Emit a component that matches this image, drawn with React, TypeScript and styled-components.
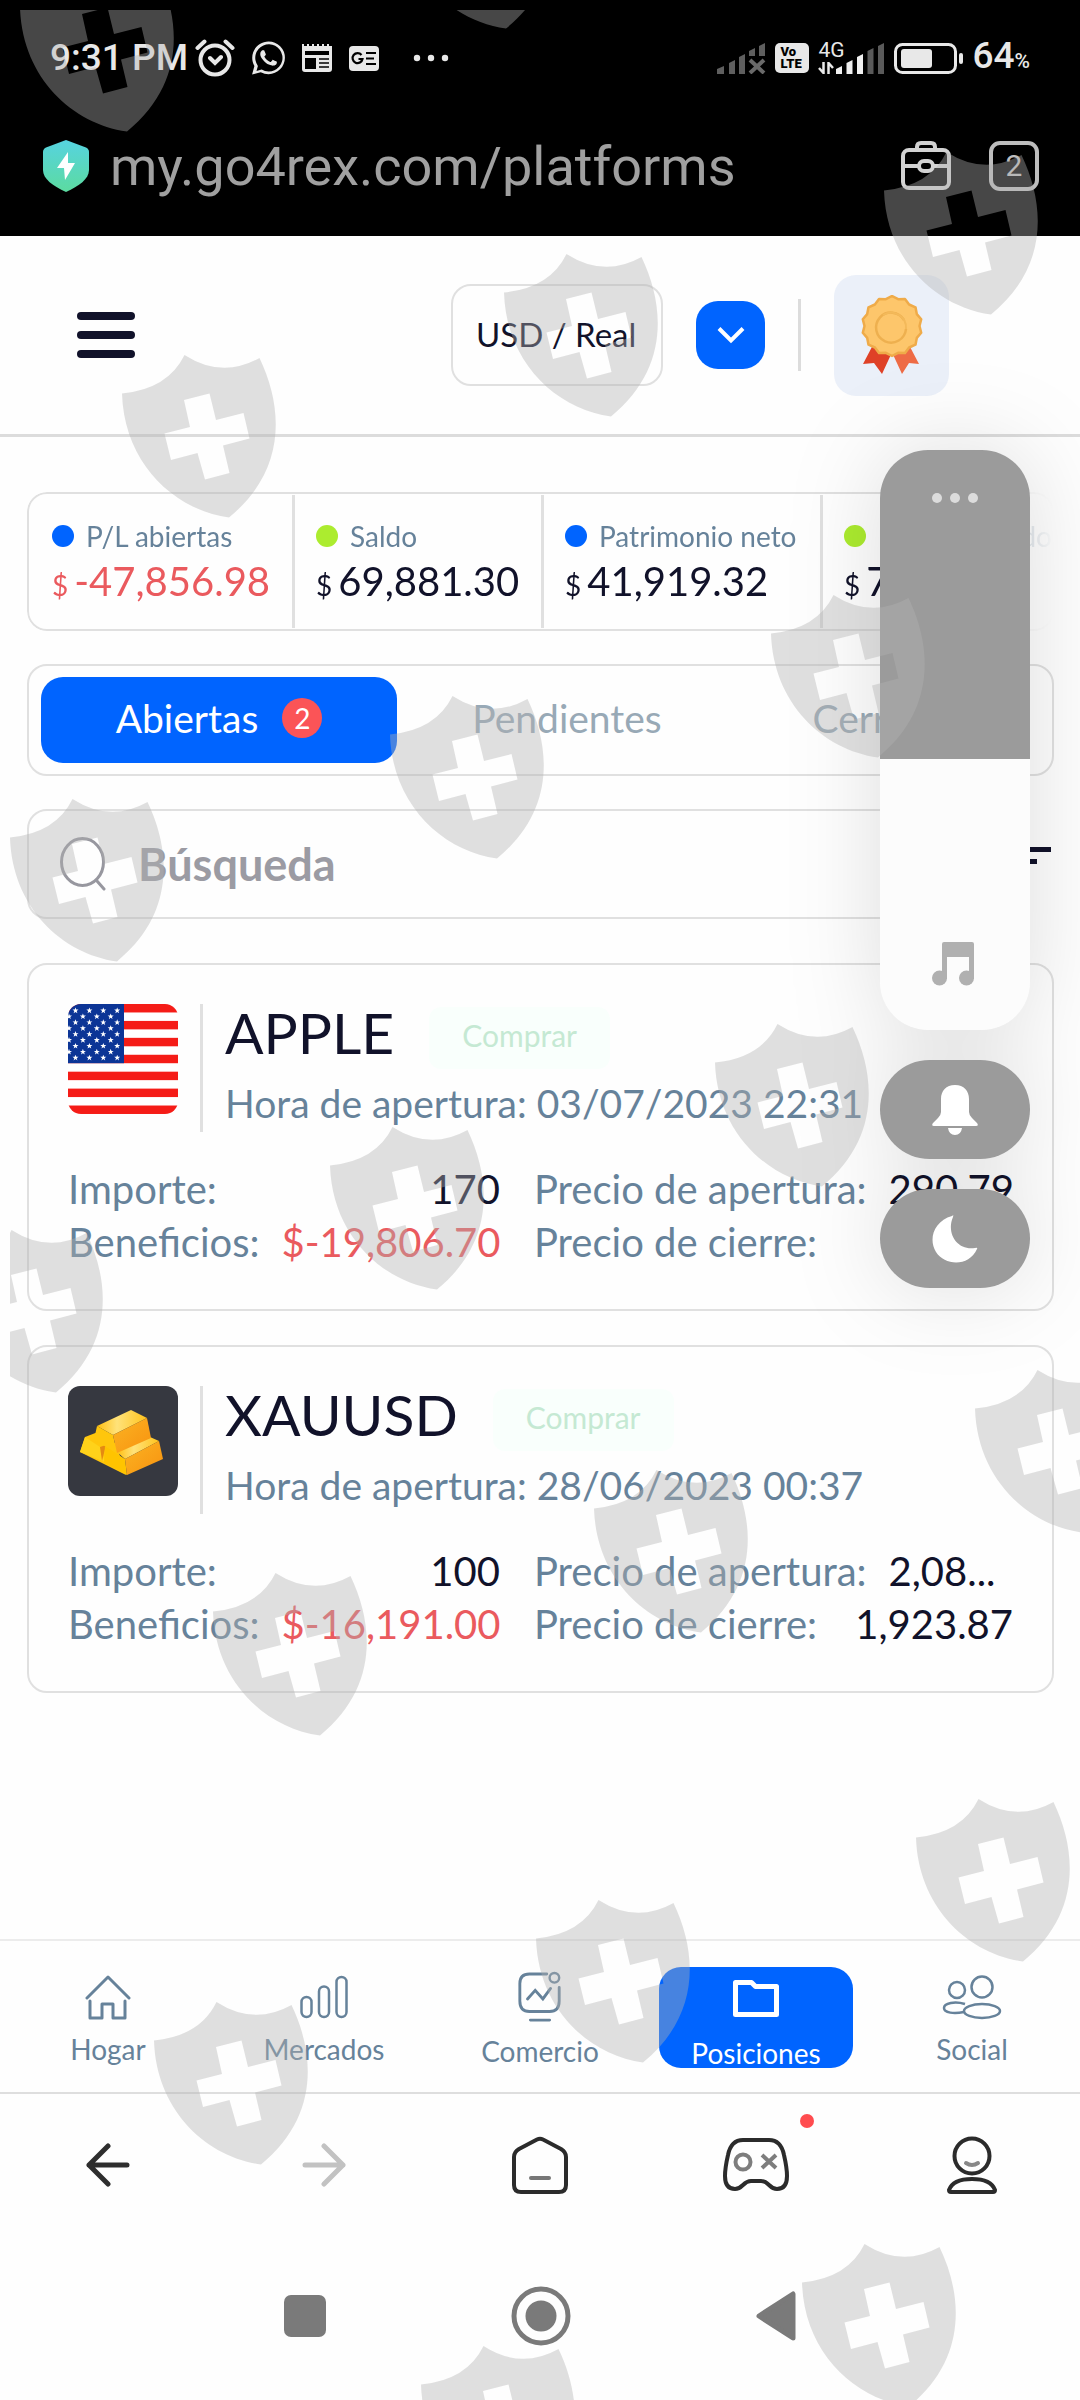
import React from "react";
import styled, { createGlobalStyle } from "styled-components";

const Global = createGlobalStyle`
  *, *::before, *::after { box-sizing: border-box; }
  body { margin: 0; background: #fefefe; }
  button, input, select { font: inherit; color: inherit; }
  button { border: 0; padding: 0; background: none; cursor: pointer; }
  a { color: inherit; text-decoration: none; }
  svg { display: block; flex: none; }
`;

const line = "#e0e0e0";
const ink = "#11122a";
const slate = "#66829a";
const blue = "#0064ff";
const red = "#ea5a5e";
const ui = `"Lato", "Open Sans", sans-serif`;
const system = `"Roboto", "Noto Sans", sans-serif`;

const Page = styled.div`
  position: relative;
  display: flex;
  flex-direction: column;
  min-height: 100vh;
  overflow: hidden;
  background: #fefefe;
  color: ${ink};
  font-family: ${ui};
`;

/* ---------- device status and address bar ---------- */

const TopArea = styled.div`
  height: 236px;
  background: #000;
  font-family: ${system};
`;

const StatusBar = styled.div`
  display: flex;
  align-items: center;
  justify-content: space-between;
  height: 116px;
  padding: 0 50px 0 50px;
  color: #e8e8e8;
`;

const StatusGroup = styled.div<{ $gap: number }>`
  display: flex;
  align-items: center;
  gap: ${(p) => p.$gap}px;
`;

const Clock = styled.span`
  font-size: 37px;
  line-height: 40px;
  font-weight: 500;
  margin-right: -10px;
`;

const Battery = styled.span`
  font-size: 37px;
  line-height: 40px;
  font-weight: 500;
  small { font-size: 21px; }
`;

const AddressBar = styled.div`
  display: flex;
  align-items: center;
  height: 100px;
  padding: 0 41px 0 43px;
`;

const Url = styled.span`
  flex: 1;
  margin-left: 21px;
  padding-top: 2px;
  font-size: 54px;
  line-height: 64px;
  color: #a0a0a0;
`;

const TabCount = styled.button`
  width: 50px;
  height: 50px;
  margin-left: 38px;
  border: 4px solid #bdbdbd;
  border-radius: 11px;
  color: #bdbdbd;
  font-size: 30px;
  line-height: 42px;
`;

/* ---------- site header ---------- */

const Header = styled.header`
  display: flex;
  align-items: center;
  height: 201px;
  padding: 0 131px 0 77px;
  border-bottom: 3px solid #dcdcdc;
`;

const MenuButton = styled.button`
  display: grid;
  gap: 11px;
  width: 58px;
  margin-right: auto;
  span { height: 8px; border-radius: 4px; background: ${ink}; }
`;

const AccountSelect = styled.select`
  appearance: none;
  width: 212px;
  height: 102px;
  padding: 0 0 2px 23px;
  border: 2px solid ${line};
  border-radius: 20px;
  background: transparent;
  font-size: 33px;
  color: ${ink};
`;

const Chevron = styled.button`
  display: grid;
  place-items: center;
  width: 69px;
  height: 68px;
  margin-left: 33px;
  border-radius: 22px;
  background: ${blue};
`;

const HeaderRule = styled.span`
  width: 3px;
  height: 72px;
  margin: 0 33px;
  background: #dcdcdc;
`;

const MedalButton = styled.button`
  display: grid;
  place-items: center;
  width: 115px;
  height: 121px;
  border-radius: 22px;
  background: #ebf0f9;
`;

/* ---------- main ---------- */

const Main = styled.main`
  flex: 1;
  display: flex;
  flex-direction: column;
  padding: 55px 26px 34px 27px;
`;

const Stats = styled.section`
  display: grid;
  grid-template-columns: 263fr 249fr 279fr 232fr;
  border: 2px solid ${line};
  border-radius: 20px;
  mask-image: linear-gradient(to right, #000 calc(100% - 130px), transparent);
`;

const Stat = styled.div`
  min-width: 0;
  padding: 27px 0 25px 23px;
  white-space: nowrap;
  & + & { border-left: 3px solid ${line}; margin: 1px 0; padding: 26px 0 24px 21px; }
`;

const StatLabel = styled.div<{ $dot: string }>`
  display: flex;
  align-items: center;
  gap: 12px;
  font-size: 28px;
  line-height: 30px;
  color: ${slate};
  &::before {
    content: "";
    width: 22px;
    height: 22px;
    border-radius: 50%;
    background: ${(p) => p.$dot};
  }
`;

const StatValue = styled.div<{ $negative?: boolean }>`
  display: flex;
  align-items: baseline;
  gap: 6px;
  height: 46px;
  margin-top: 7px;
  font-size: 40px;
  line-height: 46px;
  color: ${(p) => (p.$negative ? red : ink)};
  small { font-size: 28px; }
`;

const Tabs = styled.nav`
  display: grid;
  grid-template-columns: 356fr 340fr 303fr;
  margin-top: 33px;
  padding: 11px 12px;
  border: 2px solid ${line};
  border-radius: 20px;
`;

const Tab = styled.button<{ $active?: boolean }>`
  display: flex;
  align-items: center;
  justify-content: center;
  gap: 24px;
  height: 86px;
  padding-bottom: 4px;
  border-radius: 22px;
  font-size: 39px;
  line-height: 44px;
  background: ${(p) => (p.$active ? blue : "transparent")};
  color: ${(p) => (p.$active ? "#fff" : "#98a9b6")};
`;

const Count = styled.span`
  display: grid;
  place-items: center;
  width: 40px;
  height: 40px;
  border-radius: 50%;
  background: #fb5457;
  font-size: 28px;
  line-height: 30px;
`;

const SearchRow = styled.div`
  display: flex;
  align-items: center;
  gap: 24px;
  margin-top: 33px;
`;

const SearchBox = styled.label`
  display: flex;
  flex: 1;
  align-items: center;
  gap: 32px;
  height: 110px;
  padding: 0 31px;
  border: 2px solid ${line};
  border-radius: 20px;
  input {
    flex: 1;
    min-width: 0;
    border: 0;
    padding: 0;
    outline: 0;
    background: none;
    font-size: 45px;
    font-weight: 700;
  }
  input::placeholder { color: #9b9ba3; opacity: 1; }
`;

const Cards = styled.section`
  display: grid;
  gap: 34px;
  margin-top: 44px;
`;

const Card = styled.article`
  padding: 39px;
  padding-bottom: 40px;
  border: 2px solid ${line};
  border-radius: 20px;
`;

const CardHead = styled.div`
  display: flex;
  height: 128px;
`;

const CardTitles = styled.div`
  margin-left: 22px;
  padding-left: 22px;
  border-left: 3px solid ${line};
`;

const TitleRow = styled.div`
  display: flex;
  align-items: flex-start;
  gap: 35px;
`;

const Title = styled.h2`
  margin: 0;
  font-size: 57px;
  line-height: 56px;
  font-weight: 400;
`;

const Side = styled.span`
  margin-top: 3px;
  padding: 0 33px 6px;
  border-radius: 12px;
  background: #f9fffc;
  color: #c5e9d3;
  font-size: 30px;
  line-height: 56px;
`;

const Opened = styled.p`
  margin: 12px 0 0;
  font-size: 39px;
  line-height: 44px;
  color: ${slate};
  white-space: nowrap;
`;

const Fields = styled.dl`
  display: grid;
  grid-template-columns: 431fr 478fr;
  column-gap: 34px;
  margin: 31px 0 0;
`;

const Field = styled.div`
  display: flex;
  gap: 22px;
  min-width: 0;
  font-size: 40px;
  line-height: 53px;
  white-space: nowrap;
  dt { color: ${slate}; }
`;

const Value = styled.dd<{ $negative?: boolean; $cut?: boolean }>`
  flex: 1;
  margin: 0;
  text-align: ${(p) => (p.$cut ? "left" : "right")};
  color: ${(p) => (p.$negative ? red : ink)};
`;

/* ---------- bottom bars ---------- */

const BottomNav = styled.nav`
  display: grid;
  grid-template-columns: repeat(5, 1fr);
  height: 155px;
  border-top: 2px solid #ececec;
  border-bottom: 2px solid #dedede;
`;

const NavItem = styled.a<{ $active?: boolean }>`
  display: flex;
  flex-direction: column;
  align-items: center;
  justify-self: center;
  width: 194px;
  height: 101px;
  margin-top: 26px;
  padding-top: ${(p) => (p.$active ? 13 : 7)}px;
  border-radius: 22px;
  gap: ${(p) => (p.$active ? 20 : 13)}px;
  background: ${(p) => (p.$active ? blue : "transparent")};
  color: ${(p) => (p.$active ? "#fff" : slate)};
  font-size: 28px;
  line-height: 32px;
`;

const BrowserBar = styled.nav`
  display: grid;
  grid-template-columns: repeat(5, 1fr);
  place-items: center;
  height: 142px;
`;

const BrowserButton = styled.button<{ $alert?: boolean }>`
  position: relative;
  &::after {
    content: "";
    display: ${(p) => (p.$alert ? "block" : "none")};
    position: absolute;
    top: -24px;
    right: -25px;
    width: 14px;
    height: 14px;
    border-radius: 50%;
    background: #ff4c4f;
  }
`;

const SystemBar = styled.nav`
  display: flex;
  align-items: center;
  justify-content: center;
  gap: 185px;
  height: 164px;
  padding-bottom: 4px;
`;

/* ---------- volume overlay ---------- */

const VolumePanel = styled.aside`
  position: absolute;
  top: 450px;
  right: 50px;
  display: grid;
  gap: 30px;
  width: 150px;
  filter: drop-shadow(0 0 45px rgba(0, 0, 0, 0.13));
`;

const Slider = styled.div`
  position: relative;
  height: 580px;
  border-radius: 48px;
  overflow: hidden;
  input {
    appearance: none;
    display: block;
    width: 100%;
    height: 100%;
    margin: 0;
    writing-mode: vertical-lr;
    direction: rtl;
    background: linear-gradient(#9b9b9b 309px, #fcfcfc 309px);
  }
  input::-webkit-slider-thumb { appearance: none; width: 1px; height: 1px; }
`;

const SliderMore = styled.button`
  position: absolute;
  top: 43px;
  left: 52px;
`;

const SliderNote = styled.span`
  position: absolute;
  bottom: 44px;
  left: 52px;
`;

const Pill = styled.button`
  display: grid;
  place-items: center;
  height: 99px;
  border-radius: 50px;
  background: #9b9b9b;
`;

const Watermark = styled.div`
  position: absolute;
  inset: 10px 0 0 10px;
  overflow: hidden;
  pointer-events: none;
  opacity: 0.4;
  svg { width: 100%; height: 100%; }
`;

/* ---------- drawings ---------- */

const signalBars = [8, 14, 20, 26, 31];
const Signal = ({ level }: { level: number }) => (
  <svg width="49" height="31" viewBox="0 0 49 31">
    {signalBars.map((h, i) => (
      <path key={h} d={`M${i * 10.5} 31V${34 - h}L${i * 10.5 + 6} ${31 - h}V31Z`} fill={i < level ? "#f0f0f0" : "#5a5a5a"} />
    ))}
  </svg>
);

const NoSignal = () => (
  <svg width="49" height="31" viewBox="0 0 49 31">
    <path d="M0 31v-5l7-3v8zM12 31V20l6-3v14zM22 31V14l6-3v20zM32 13V8l6-3v8zM42 13V3l6-3v13z" fill="#5f5f5f" />
    <path d="M33 17l14 13M47 17L33 30" stroke="#6a6a6a" strokeWidth="4" />
  </svg>
);

const Alarm = () => (
  <svg width="40" height="38" viewBox="0 0 40 38" fill="none" stroke="#e8e8e8" strokeWidth="4" strokeLinecap="round">
    <circle cx="20" cy="21" r="14.5" />
    <path d="M2.500 9l7-6.500M37.500 9l-7-6.500M15 19l5 5 6-6" />
  </svg>
);

const Whatsapp = () => (
  <svg width="33" height="34" viewBox="0 0 24 24" fill="#e8e8e8">
    <path d="M12.050 0C5.500 0 .16 5.340.16 11.900c0 2.100.55 4.140 1.590 5.940L.06 24l6.300-1.650a11.900 11.900 0 0 0 5.690 1.450c6.550 0 11.890-5.340 11.890-11.900A11.900 11.900 0 0 0 12.050 0zm0 21.800a9.900 9.900 0 0 1-5.030-1.380l-3.740.98 1-3.650A9.900 9.900 0 1 1 12.050 21.800zm5.430-7.400c-.3-.15-1.760-.87-2.030-.97-.27-.1-.47-.15-.67.15s-.77.97-.94 1.160-.35.220-.64.080c-1.760-.88-2.920-1.570-4.080-3.560-.3-.53.310-.49.890-1.640.1-.2.050-.37-.03-.52l-.91-2.200c-.24-.58-.49-.5-.67-.51h-.57c-.2 0-.52.070-.79.370s-1.040 1.020-1.040 2.480 1.060 2.880 1.210 3.070c.15.200 2.100 3.200 5.080 4.490 1.890.81 2.630.88 3.570.74.570-.09 1.760-.72 2.010-1.410s.25-1.290.17-1.410c-.07-.13-.27-.2-.56-.35z" />
  </svg>
);

const News = () => (
  <svg width="30" height="28" viewBox="0 0 30 28">
    <path d="M0 0h2v2h3V0h2v2h3V0h2v2h3V0h2v2h3V0h2v2h3V0h2v2h3v23q0 3-3 3H3q-3 0-3-3z" fill="#e8e8e8" />
    <path d="M3 7h24v4H3zM3 14h11v11H3z" fill="#000" />
    <path d="M17 15h10M17 19h10M17 23h10" stroke="#000" strokeWidth="1.500" />
  </svg>
);

const NewsBadge = () => (
  <svg width="30" height="25" viewBox="0 0 30 25">
    <rect width="30" height="25" rx="4" fill="#e8e8e8" />
    <path d="M12.500 9A5 5 0 1 0 13.500 13H9.500M17 7h10M17 12.500h8M17 18h10" fill="none" stroke="#000" strokeWidth="2.200" />
  </svg>
);

const Dots = () => (
  <svg width="36" height="8" viewBox="0 0 36 8" fill="#e8e8e8">
    <circle cx="4" cy="4" r="3.200" /><circle cx="18" cy="4" r="3.200" /><circle cx="32" cy="4" r="3.200" />
  </svg>
);

const VolteBox = styled.span`
  display: grid;
  align-content: center;
  justify-items: start;
  width: 34px;
  height: 30px;
  padding-left: 5px;
  border-radius: 5px;
  background: #e8e8e8;
  color: #000;
  font-size: 13px;
  line-height: 12px;
  font-weight: 900;
`;

const NetBox = styled.span`
  display: flex;
  align-items: flex-end;
  gap: 3px;
`;

const NetType = styled.span`
  display: grid;
  gap: 4px;
  justify-items: start;
  width: 15px;
  white-space: nowrap;
  font-size: 21px;
  line-height: 16px;
`;

const DataArrows = () => (
  <svg width="16" height="12" viewBox="0 0 16 12" fill="none" stroke="#e8e8e8" strokeWidth="2.500">
    <path d="M5.500 0v11L1 6M10.500 12V1L15 6" />
  </svg>
);

const BatteryIcon = () => (
  <svg width="69" height="31" viewBox="0 0 69 31" fill="none">
    <rect x="1.500" y="1.500" width="60" height="28" rx="7" stroke="#e8e8e8" strokeWidth="3" />
    <rect x="7" y="6" width="31" height="19" rx="3" fill="#e8e8e8" />
    <rect x="65" y="10" width="4" height="11" rx="2" fill="#e8e8e8" />
  </svg>
);

const SecureIcon = () => (
  <svg width="46" height="52" viewBox="0 0 46 52">
    <defs>
      <linearGradient id="secure" x1="0" y1="0" x2="0" y2="1">
        <stop offset="0" stopColor="#56d3e0" /><stop offset="1" stopColor="#5cdba0" />
      </linearGradient>
    </defs>
    <path d="M23 0L43 7.500Q46 9 46 12V30C46 39 36 46 23 52C10 46 0 39 0 30V12Q0 9 3 7.500Z" fill="url(#secure)" />
    <path d="M25 12L14 28h7l1 12 10-17h-7z" fill="#fff" />
  </svg>
);

const ToolboxIcon = () => (
  <svg width="50" height="50" viewBox="0 0 50 50" fill="none" stroke="#d2d2d2" strokeWidth="4">
    <rect x="2" y="9" width="46" height="38" rx="6" />
    <path d="M16 8V6q0-4 4-4h10q4 0 4 4v2M3 25h15M33 25h15" />
    <rect x="18" y="20" width="14" height="10" rx="5" />
  </svg>
);

const Medal = () => {
  const pts: string[] = [];
  for (let i = 0; i < 28; i++) {
    const r = i % 2 ? 27.500 : 30;
    const a = (i * Math.PI) / 14;
    pts.push(`${(31 + r * Math.sin(a)).toFixed(1)},${(31 - r * Math.cos(a)).toFixed(1)}`);
  }
  return (
    <svg width="62" height="80" viewBox="0 0 62 80">
      <path d="M13 48L2 69l11-1 8 11 12-26z" fill="#df4127" />
      <path d="M47 48l11 21-10-1-7 11-12-26z" fill="#ee6b45" />
      <polygon points={pts.join(" ")} fill="#fdc66b" stroke="#efab49" strokeWidth="2.500" strokeLinejoin="round" />
      <path d="M43 25a15 15 0 1 0 2 9" fill="none" stroke="#eeb04f" strokeWidth="2.500" />
      <path d="M22 20a15 15 0 0 1 23 14" fill="none" stroke="#f3b95a" strokeWidth="2" />
    </svg>
  );
};

const Flag = () => {
  const stars: React.ReactNode[] = [];
  for (let r = 0; r < 9; r++)
    for (let c = 0; c < 4; c++) {
      const x = (r % 2 ? 1 : 7.500) + c * 13.900;
      const y = 6.500 + r * 5.900;
      stars.push(<path key={`${r}-${c}`} d={`M${x} ${y - 3}l.8 2.100h2.200l-1.800 1.400.7 2.200-1.900-1.300-1.900 1.300.7-2.200-1.800-1.400h2.200z`} />);
    }
  return (
    <svg width="110" height="110" viewBox="0 0 110 110">
      <clipPath id="flag"><rect width="110" height="110" rx="13" /></clipPath>
      <g clipPath="url(#flag)">
        <rect width="110" height="110" fill="#fff" />
        {[0, 1, 2, 3, 4, 5, 6].map((i) => <rect key={i} y={i * 16.920} width="110" height="8.460" fill="#f51c17" />)}
        <rect width="56" height="59.200" fill="#0c3596" />
        <g fill="#fff">{stars}</g>
      </g>
    </svg>
  );
};

const Gold = () => (
  <svg width="110" height="110" viewBox="0 0 110 110">
    <defs>
      <linearGradient id="g1" x1="0" y1="0" x2="1" y2="1"><stop offset="0" stopColor="#fbb423" /><stop offset="1" stopColor="#f8920f" /></linearGradient>
      <linearGradient id="g2" x1="0" y1="0" x2="1" y2="0"><stop offset="0" stopColor="#ffbf10" /><stop offset=".4" stopColor="#ffe27a" /><stop offset="1" stopColor="#ffc31c" /></linearGradient>
    </defs>
    <rect width="110" height="110" rx="12" fill="#363840" />
    <path d="M17 51L30 46 48 58 58 89 12 66z" fill="#ffc60c" />
    <path d="M17 51l15 10 5 15-25-10z" fill="#ffd21a" />
    <path d="M32 61l6-2-4 16z" fill="#e58a12" />
    <path d="M37 60l20 13 2 16-23-12z" fill="#ffc400" />
    <path d="M49 66L82 51l9 4-34 18z" fill="url(#g2)" />
    <path d="M57 73l34-18 4 18-36 16z" fill="url(#g1)" />
    <path d="M29 40L63 24l16 8-34 17z" fill="url(#g2)" />
    <path d="M29 40l16 9 4 18-23-13z" fill="#ffc60c" />
    <path d="M45 49l34-17 4 20-34 15z" fill="url(#g1)" />
  </svg>
);

const SearchIcon = () => (
  <svg width="46" height="54" viewBox="0 0 46 54" fill="none" stroke="#97979f" strokeWidth="3" strokeLinecap="round">
    <ellipse cx="22.500" cy="25" rx="21" ry="23.500" /><path d="M37 44l7 8" />
  </svg>
);

const FilterIcon = () => (
  <svg width="48" height="34" viewBox="0 0 48 34" stroke={ink} strokeWidth="5">
    <path d="M0 2.500h45M7 14.500h24M14 26.500h7" />
  </svg>
);

const HomeIcon = () => (
  <svg width="46" height="46" viewBox="0 0 46 46" fill="none" stroke="currentColor" strokeWidth="3" strokeLinecap="round" strokeLinejoin="round">
    <path d="M2 24L23 3l21 21M5 27v17h12V30h11v14h12V27" />
  </svg>
);
const BarsIcon = () => (
  <svg width="48" height="46" viewBox="0 0 48 46" fill="none" stroke="currentColor" strokeWidth="2.500">
    <rect x="1.500" y="23" width="10" height="20" rx="5" /><rect x="19" y="12.500" width="10" height="30.500" rx="5" /><rect x="36.500" y="3" width="10" height="40" rx="5" />
  </svg>
);
const TradeIcon = () => (
  <svg width="46" height="48" viewBox="0 2 46 50" fill="none" stroke="currentColor" strokeWidth="3" strokeLinecap="round" overflow="visible">
    <path d="M30 2H12Q2 2 2 12V30Q2 41 12 41H33Q43 41 43 30V16M13 50h20M10 28l8-9 8 9 8-11" />
    <circle cx="38" cy="6" r="5" strokeWidth="2.500" />
  </svg>
);
const FolderIcon = () => (
  <svg width="46" height="37" viewBox="0 0 46 37" fill="none" stroke="currentColor" strokeWidth="5" strokeLinejoin="round">
    <path d="M2.500 2.500h16l4 4h21v28h-41z" />
  </svg>
);
const SocialIcon = () => (
  <svg width="60" height="46" viewBox="0 0 60 46" fill="none" stroke="currentColor" strokeWidth="2.500">
    <circle cx="15" cy="16" r="8" /><circle cx="40" cy="13" r="10.500" />
    <ellipse cx="40" cy="37" rx="18" ry="7" /><path d="M23 30c-10-3-21-1-21 4s10 6 20 4" />
  </svg>
);

const ArrowIcon = ({ back }: { back?: boolean }) => (
  <svg width="44" height="44" viewBox="0 0 44 44" fill="none" stroke={back ? "#2e2e2e" : "#c2c2c2"} strokeWidth="5" strokeLinecap="round" strokeLinejoin="round">
    <path d={back ? "M22 3L3 22l19 19M3 22h38" : "M22 3l19 19-19 19M41 22H3"} />
  </svg>
);
const BrowserHome = () => (
  <svg width="56" height="58" viewBox="0 0 56 58" fill="none" stroke="#2b2b2b" strokeWidth="4" strokeLinejoin="round" strokeLinecap="round">
    <path d="M25 3.500Q28 2 31 3.500L49 13Q54 16 54 21V49Q54 56 47 56H9Q2 56 2 49V21Q2 16 7 13Z" />
    <path d="M19 42h18" stroke="#777" />
  </svg>
);
const Gamepad = () => (
  <svg width="66" height="54" viewBox="0 0 66 54" fill="none" stroke="#2b2b2b" strokeWidth="4">
    <path d="M20 2H46Q58 2 61 17Q64 30 64 38Q64 51 54 51Q50 51 46 47Q42 43 38 43H28Q24 43 20 47Q16 51 12 51Q2 51 2 38Q2 30 5 17Q8 2 20 2Z" />
    <circle cx="20" cy="24" r="7.500" stroke="#7d7d7d" /><path d="M39 17l14 13M53 17L39 30" stroke="#7d7d7d" />
  </svg>
);
const Profile = () => (
  <svg width="50" height="58" viewBox="0 0 50 58" fill="none" stroke="#2b2b2b" strokeWidth="4" strokeLinejoin="round" strokeLinecap="round">
    <circle cx="25" cy="20" r="17.500" /><path d="M2 54q4-11 23-11t23 11q0 2-2 2H4q-2 0-2-2z" />
    <path d="M19 27q6 4 12 0" stroke="#888" />
  </svg>
);

const shields: [number, number][] = [
  [20, -31], [399, -134], [884, 152], [122, 355], [504, 254], [771, 595], [390, 696], [10, 799],
  [715, 1024], [330, 1127], [-51, 1230], [975, 1370], [594, 1470], [213, 1573], [916, 1799],
  [536, 1900], [154, 2002], [802, 2244], [421, 2346],
];

const stats = [
  { label: "P/L abiertas", value: "-47,856.98", dot: blue, negative: true },
  { label: "Saldo", value: "69,881.30", dot: "#acec2f" },
  { label: "Patrimonio neto", value: "41,919.32", dot: blue },
  { label: "Margen usado", value: "7", dot: "#acec2f" },
];

const positions = [
  { name: "APPLE", icon: <Flag />, opened: "03/07/2023 22:31", amount: "170", profit: "$-19,806.70", open: "290.79", close: "" },
  { name: "XAUUSD", icon: <Gold />, opened: "28/06/2023 00:37", amount: "100", profit: "$-16,191.00", open: "2,08...", close: "1,923.87" },
];

const nav = [
  { label: "Hogar", icon: <HomeIcon /> },
  { label: "Mercados", icon: <BarsIcon /> },
  { label: "Comercio", icon: <TradeIcon /> },
  { label: "Posiciones", icon: <FolderIcon />, active: true },
  { label: "Social", icon: <SocialIcon /> },
];

export default function App() {
  return (
    <Page>
      <Global />
      <TopArea>
        <StatusBar>
          <StatusGroup $gap={17}>
            <Clock>9:31 PM</Clock>
            <Alarm /><Whatsapp /><News /><NewsBadge />
            <span />
            <Dots />
          </StatusGroup>
          <StatusGroup $gap={9}>
            <NoSignal />
            <VolteBox><span>Vo</span><span>LTE</span></VolteBox>
            <NetBox>
              <NetType>4G<DataArrows /></NetType>
              <Signal level={3} />
            </NetBox>
            <BatteryIcon />
            <Battery>64<small>%</small></Battery>
          </StatusGroup>
        </StatusBar>
        <AddressBar>
          <SecureIcon />
          <Url>my.go4rex.com/platforms</Url>
          <button aria-label="Herramientas"><ToolboxIcon /></button>
          <TabCount>2</TabCount>
        </AddressBar>
      </TopArea>

      <Header>
        <MenuButton aria-label="Menú"><span /><span /><span /></MenuButton>
        <AccountSelect aria-label="Cuenta"><option>USD / Real</option></AccountSelect>
        <Chevron aria-label="Abrir cuentas">
          <svg width="28" height="18" viewBox="0 0 28 18" fill="none" stroke="#fff" strokeWidth="4"><path d="M2 2.500l12 12 12-12" /></svg>
        </Chevron>
        <HeaderRule />
        <MedalButton aria-label="Premios"><Medal /></MedalButton>
      </Header>

      <Main>
        <Stats>
          {stats.map((s) => (
            <Stat key={s.label}>
              <StatLabel $dot={s.dot}>{s.label}</StatLabel>
              <StatValue $negative={s.negative}><small>$</small>{s.value}</StatValue>
            </Stat>
          ))}
        </Stats>

        <Tabs>
          <Tab $active>Abiertas<Count>2</Count></Tab>
          <Tab>Pendientes</Tab>
          <Tab>Cerradas</Tab>
        </Tabs>

        <SearchRow>
          <SearchBox>
            <SearchIcon />
            <input type="search" placeholder="Búsqueda" aria-label="Búsqueda" />
          </SearchBox>
          <button aria-label="Filtrar"><FilterIcon /></button>
        </SearchRow>

        <Cards>
          {positions.map((p) => (
            <Card key={p.name}>
              <CardHead>
                {p.icon}
                <CardTitles>
                  <TitleRow><Title>{p.name}</Title><Side>Comprar</Side></TitleRow>
                  <Opened>Hora de apertura: {p.opened}</Opened>
                </CardTitles>
              </CardHead>
              <Fields>
                <Field><dt>Importe:</dt><Value>{p.amount}</Value></Field>
                <Field><dt>Precio de apertura:</dt><Value $cut={p.open.endsWith("...")}>{p.open}</Value></Field>
                <Field><dt>Beneficios:</dt><Value $negative>{p.profit}</Value></Field>
                <Field><dt>Precio de cierre:</dt><Value>{p.close}</Value></Field>
              </Fields>
            </Card>
          ))}
        </Cards>
      </Main>

      <BottomNav>
        {nav.map((n) => (
          <NavItem key={n.label} href="#" $active={n.active}>{n.icon}{n.label}</NavItem>
        ))}
      </BottomNav>
      <BrowserBar>
        <BrowserButton aria-label="Atrás"><ArrowIcon back /></BrowserButton>
        <BrowserButton aria-label="Adelante"><ArrowIcon /></BrowserButton>
        <BrowserButton aria-label="Inicio"><BrowserHome /></BrowserButton>
        <BrowserButton aria-label="Juegos" $alert><Gamepad /></BrowserButton>
        <BrowserButton aria-label="Perfil"><Profile /></BrowserButton>
      </BrowserBar>
      <SystemBar>
        <button aria-label="Recientes"><svg width="42" height="42"><rect width="42" height="42" rx="7" fill="#7a7a7a" /></svg></button>
        <button aria-label="Principal">
          <svg width="60" height="60"><circle cx="30" cy="30" r="27" fill="none" stroke="#7a7a7a" strokeWidth="5" /><circle cx="30" cy="30" r="15.500" fill="#7a7a7a" /></svg>
        </button>
        <button aria-label="Volver"><svg width="40" height="50"><path d="M37 3v44L3 25z" fill="#7a7a7a" stroke="#7a7a7a" strokeWidth="5" strokeLinejoin="round" /></svg></button>
      </SystemBar>

      <VolumePanel>
        <Slider>
          <input type="range" aria-label="Volumen" defaultValue={47} />
          <SliderMore aria-label="Más">
            <svg width="46" height="10" fill="#dcdcdc"><circle cx="5" cy="5" r="5" /><circle cx="23" cy="5" r="5" /><circle cx="41" cy="5" r="5" /></svg>
          </SliderMore>
          <SliderNote>
            <svg width="43" height="44" fill="#b0b0b0">
              <path d="M10 2q0-2 2-2h28q2 0 2 2v35h-5V15H15v22h-5z" /><circle cx="7.500" cy="36" r="7.500" /><circle cx="34.500" cy="36" r="7.500" />
            </svg>
          </SliderNote>
        </Slider>
        <Pill aria-label="Sonido">
          <svg width="46" height="50" fill="#fff">
            <path d="M23 0C14 0 9 6 9 14v13q0 3-3 6l-5 5q-2 3 1 3h42q3 0 1-3l-5-5q-3-3-3-6V14C37 6 32 0 23 0zM16 43h14q-1 7-7 7t-7-7z" />
          </svg>
        </Pill>
        <Pill aria-label="No molestar">
          <svg width="46" height="48" fill="#fff"><path d="M20 1Q22-1 21 2C14 18 25 36 43 33q3-1 2 1C37 52 13 51 4 37C-4 24 2 6 20 1z" /></svg>
        </Pill>
      </VolumePanel>

      <Watermark aria-hidden="true">
        <svg fill="#b2b2b2">
          {shields.map(([x, y]) => (
            <path
              key={`${x} ${y}`}
              transform={`translate(${x - 10} ${y - 10})`}
              fillRule="evenodd"
              d="M0 38.500Q46 34 62.500 0Q100 24 137.500 3C162 54 164 116 107 162.500C52 155 2 108 0 38.500ZM62 45L87.500 38.500 94 65 121.500 58 127.500 83.500 101 90.500 107.500 118 83 124.500 75.500 98 49 105 42.500 78.500 68 72Z"
            />
          ))}
        </svg>
      </Watermark>
    </Page>
  );
}
